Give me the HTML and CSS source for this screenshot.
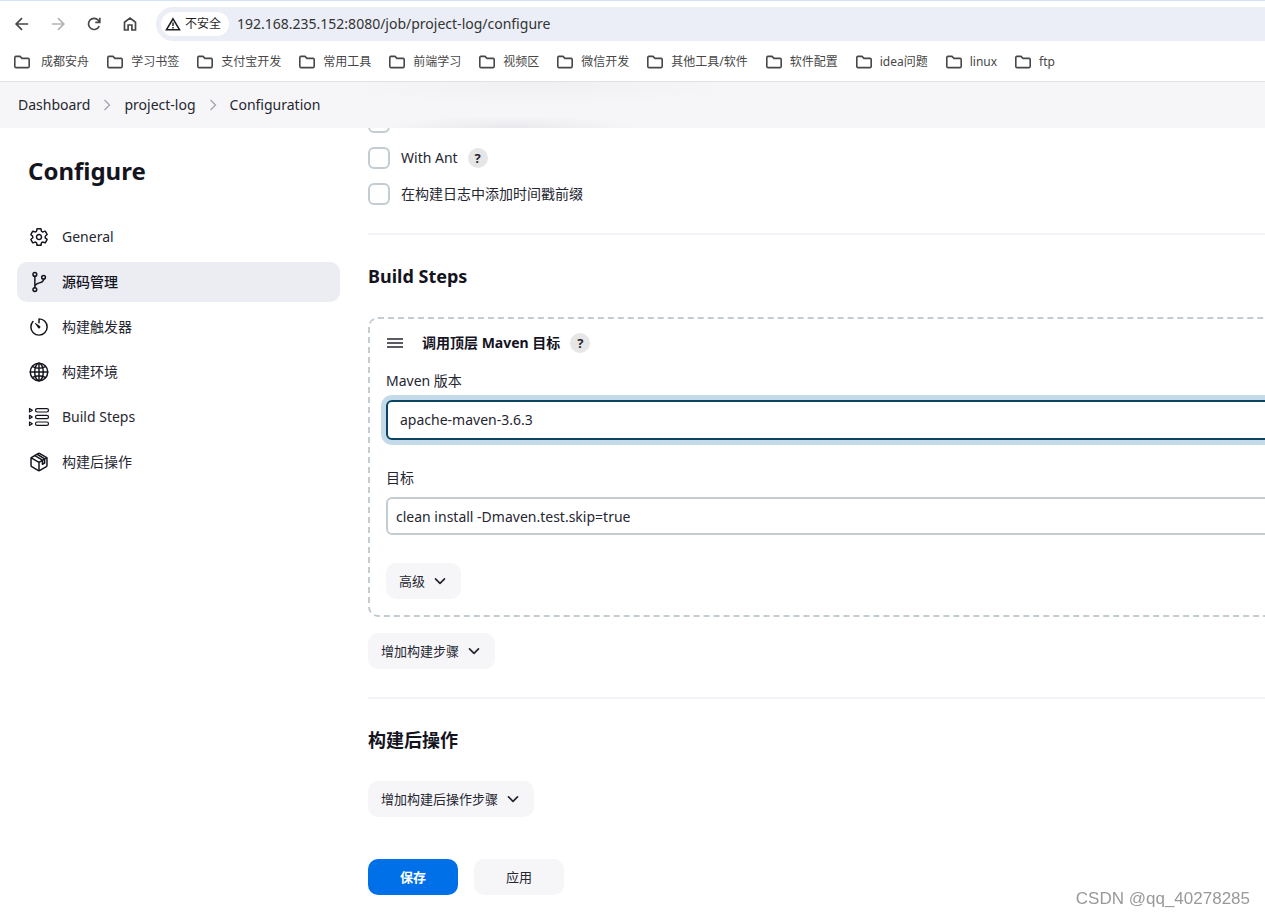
FILE: index.html
```
<!DOCTYPE html>
<html lang="zh-CN">
<head>
<meta charset="utf-8">
<title>project-log Config</title>
<link rel="stylesheet" href="styles.css">
</head>
<body>
<svg class="defs" aria-hidden="true">
  <symbol id="folder" viewBox="0 0 18 16"><path d="M1.8 12.6V3.4a1 1 0 0 1 1-1H7l2 2h6.200a1 1 0 0 1 1 1v7.200a1 1 0 0 1-1 1H2.800a1 1 0 0 1-1-1z" fill="none" stroke="currentColor" stroke-width="1.600"/></symbol>
  <symbol id="chevron" viewBox="0 0 12 12"><path d="M1.500 3.800L6 8.300l4.500-4.500" fill="none" stroke="currentColor" stroke-width="1.700" stroke-linecap="round" stroke-linejoin="round"/></symbol>
  <symbol id="crumb" viewBox="0 0 12 12"><path d="M3.500 1L8.500 6l-5 5" fill="none" stroke="currentColor" stroke-width="1.400"/></symbol>
</svg>

<header class="browser">
  <div class="toolbar">
    <button class="nav-button" aria-label="Back"><svg viewBox="0 0 20 20"><path d="M16.200 10H4.500M10 4.200L4.200 10l5.800 5.800" /></svg></button>
    <button class="nav-button disabled" aria-label="Forward" disabled><svg viewBox="0 0 20 20"><path d="M3.800 10h11.700M10 4.200l5.800 5.800-5.800 5.800"/></svg></button>
    <button class="nav-button" aria-label="Reload"><svg viewBox="0 0 20 20"><path d="M15.200 12.200A5.600 5.600 0 1 1 14.300 6.200L15.600 8M15.800 3.800V8.300H11.300"/></svg></button>
    <button class="nav-button" aria-label="Home"><svg viewBox="0 0 20 20"><path d="M4.500 16V8.200L10 4l5.500 4.200V16h-3.600v-5H8.100v5z"/></svg></button>
    <div class="address">
      <button class="chip"><svg viewBox="0 0 16 14"><path d="M8 1.800L14.500 12.700h-13z" fill="none" stroke="currentColor" stroke-width="1.600"/><path d="M8 5.500v3.600M8 10.100v1.500" stroke="currentColor" stroke-width="1.500"/></svg>不安全</button>
      <input class="url" type="text" aria-label="Address" value="192.168.235.152:8080/job/project-log/configure">
    </div>
  </div>
  <nav class="bookmarks">
    <a href="#"><svg><use href="#folder"/></svg>&nbsp;成都安舟</a>
    <a href="#"><svg><use href="#folder"/></svg>学习书签</a>
    <a href="#"><svg><use href="#folder"/></svg>支付宝开发</a>
    <a href="#"><svg><use href="#folder"/></svg>常用工具</a>
    <a href="#"><svg><use href="#folder"/></svg>前端学习</a>
    <a href="#"><svg><use href="#folder"/></svg>视频区</a>
    <a href="#"><svg><use href="#folder"/></svg>微信开发</a>
    <a href="#"><svg><use href="#folder"/></svg>其他工具/软件</a>
    <a href="#"><svg><use href="#folder"/></svg>软件配置</a>
    <a href="#"><svg><use href="#folder"/></svg>idea问题</a>
    <a href="#"><svg><use href="#folder"/></svg>linux</a>
    <a href="#"><svg><use href="#folder"/></svg>ftp</a>
  </nav>
</header>

<nav class="breadcrumbs">
  <a href="#">Dashboard</a>
  <svg><use href="#crumb"/></svg>
  <a href="#">project-log</a>
  <svg><use href="#crumb"/></svg>
  <a href="#">Configuration</a>
</nav>

<div class="page">
  <aside class="sidebar">
    <h1>Configure</h1>
    <nav class="tasks">
      <a href="#"><svg viewBox="0 0 512 512"><path d="M262.290 192.310a64 64 0 1057.400 57.400 64.130 64.130 0 00-57.400-57.400zM416.390 256a154.340 154.340 0 01-1.530 20.790l45.210 35.460a10.810 10.810 0 012.450 13.750l-42.770 74a10.810 10.810 0 01-13.140 4.590l-44.900-18.080a16.110 16.110 0 00-15.170 1.750A164.480 164.480 0 01325 400.800a15.940 15.940 0 00-8.820 12.140l-6.730 47.890a11.080 11.080 0 01-10.680 9.170h-85.540a11.110 11.110 0 01-10.690-8.870l-6.720-47.820a16.070 16.070 0 00-9-12.220 155.300 155.300 0 01-21.460-12.570 16 16 0 00-15.110-1.710l-44.890 18.070a10.810 10.810 0 01-13.140-4.580l-42.770-74a10.800 10.800 0 012.450-13.750l38.210-30a16.050 16.050 0 006-14.080c-.36-4.170-.58-8.330-.58-12.500s.21-8.270.58-12.350a16 16 0 00-6.070-13.940l-38.190-30A10.810 10.810 0 0149.480 186l42.770-74a10.810 10.810 0 0113.140-4.590l44.900 18.080a16.110 16.110 0 0015.170-1.750A164.480 164.480 0 01187 111.200a15.940 15.940 0 008.820-12.140l6.730-47.890A11.080 11.080 0 01213.230 42h85.540a11.110 11.110 0 0110.690 8.870l6.720 47.820a16.070 16.070 0 009 12.220 155.300 155.300 0 0121.460 12.570 16 16 0 0015.110 1.710l44.890-18.070a10.810 10.810 0 0113.140 4.580l42.770 74a10.800 10.800 0 01-2.450 13.750l-38.210 30a16.050 16.050 0 00-6.050 14.080c.33 4.140.55 8.300.55 12.470z"/></svg>General</a>
      <a href="#" class="active"><svg viewBox="0 0 512 512"><circle cx="150" cy="62" r="48"/><circle cx="150" cy="450" r="48"/><circle cx="372" cy="136" r="48"/><path d="M150 402V110M372 184c0 130-222 60-222 200"/></svg>源码管理</a>
      <a href="#"><svg viewBox="0 0 512 512"><path d="M102 118A207 207 0 0048 254c-1 115 93 209 208 210 115 0 208-93 208-208 0-113-90-205-203-208a5 5 0 00-5 5V145"/><path class="solid" d="M233.380 278.630l-79-113a8.130 8.130 0 0111.320-11.320l113 79a32.500 32.500 0 01-37.250 53.260 33.210 33.210 0 01-8.070-7.940z"/></svg>构建触发器</a>
      <a href="#"><svg viewBox="0 0 512 512"><circle cx="256" cy="256" r="224"/><ellipse cx="256" cy="256" rx="110" ry="224"/><path d="M256 32v448M32 256h448M92 120c100 50 228 50 328 0M92 392c100-50 228-50 328 0"/></svg>构建环境</a>
      <a href="#"><svg class="thin" viewBox="0 0 20 20"><path d="M.5 1.500v3.400l2.800-1.700zM.5 8.300v3.400L3.300 10zM.5 15.100v3.400l2.800-1.700z"/><rect x="6.500" y="1.600" width="13" height="3.400" rx="1.700"/><rect x="6.500" y="8.300" width="13" height="3.400" rx="1.700"/><rect x="6.500" y="15" width="13" height="3.400" rx="1.700"/></svg>Build Steps</a>
      <a href="#"><svg viewBox="0 0 512 512"><path d="M460 346V166a32 32 0 00-16-28L280 42a48 48 0 00-48 0L68 138a32 32 0 00-16 28v180a32 32 0 0016 28l164 96a48 48 0 0048 0l164-96a32 32 0 0016-28z"/><path d="M58 148l198 116 198-116M256 474V264M150 92l194 116v106l56-32V176L220 64"/></svg>构建后操作</a>
    </nav>
  </aside>

  <main class="content">
    <div class="checks">
      <label class="check"><input type="checkbox" aria-label="Option"></label>
      <div class="check"><input type="checkbox" id="ant"><label for="ant">With Ant</label><button class="help" aria-label="Help: With Ant">?</button></div>
      <label class="check"><input type="checkbox">在构建日志中添加时间戳前缀</label>
    </div>

    <section class="section">
      <h2>Build Steps</h2>
      <div class="step">
        <div class="step-head">
          <svg viewBox="0 0 16 10"><path d="M0 1h16M0 5h16M0 9h16" stroke="currentColor" stroke-width="1.600"/></svg>
          <h3>调用顶层 Maven 目标</h3>
          <button class="help" aria-label="Help: Maven">?</button>
        </div>
        <label class="field-label" for="version">Maven 版本</label>
        <select id="version" class="field select"><option>apache-maven-3.6.3</option></select>
        <label class="field-label spaced" for="goals">目标</label>
        <input id="goals" class="field text" type="text" value="clean install -Dmaven.test.skip=true">
        <button class="button">高级<svg><use href="#chevron"/></svg></button>
      </div>
      <button class="button">增加构建步骤<svg><use href="#chevron"/></svg></button>
    </section>

    <section class="section">
      <h2>构建后操作</h2>
      <button class="button">增加构建后操作步骤<svg><use href="#chevron"/></svg></button>
    </section>

    <div class="actions">
      <button class="button wide primary">保存</button>
      <button class="button wide">应用</button>
    </div>
  </main>
</div>
<div class="watermark">CSDN @qq_40278285</div>
</body>
</html>
```

FILE: styles.css
```
* {
  box-sizing: border-box;
}

body {
  margin: 0;
  min-height: 100vh;
  overflow: hidden;
  background: #fff;
  color: #262631;
  font: 14px/20px "Noto Sans", "Noto Sans CJK SC", sans-serif;
}

h1,
h2,
h3,
.tasks svg,
.active {
  color: #14141f;
}

a {
  color: inherit;
  text-decoration: none;
}

button,
input,
select {
  margin: 0;
  border: 0;
  color: inherit;
  font: inherit;
}

.defs {
  display: none;
}

/* Browser chrome */
.browser {
  position: relative;
  z-index: 2;
  background: #fff;
  border-top: 1px solid #d3e3fd;
  border-bottom: 1px solid #dfe1e3;
  color: #474747;
}

.toolbar {
  display: flex;
  align-items: center;
  padding: 6px 0 0 4px;
}

.nav-button {
  display: grid;
  place-items: center;
  width: 36px;
  height: 34px;
  padding: 0;
  background: none;
}

.nav-button svg {
  width: 20px;
  height: 20px;
  fill: none;
  stroke: #474747;
  stroke-width: 1.7;
}

.nav-button.disabled svg {
  stroke: #b4b4b4;
}

.address {
  display: flex;
  flex: 1;
  align-items: center;
  gap: 8px;
  height: 34px;
  margin-left: 8px;
  padding-left: 5px;
  border-radius: 17px 0 0 17px;
  background: #ebeef7;
}

.chip {
  display: flex;
  align-items: center;
  gap: 4px;
  height: 24px;
  padding: 0 8px 0 4px;
  border-radius: 12px;
  background: #fff;
  color: #1f1f1f;
  font-size: 12px;
  white-space: nowrap;
}

.chip svg {
  width: 16px;
  height: 14px;
}

.url {
  flex: 1;
  min-width: 0;
  padding: 0;
  background: none;
  color: #333;
  font-size: 14px;
}

.bookmarks {
  display: flex;
  gap: 17px;
  padding: 11px 13px 9px;
  font-size: 12px;
  white-space: nowrap;
}

.bookmarks a {
  display: flex;
  align-items: center;
  gap: 7px;
}

.bookmarks svg {
  width: 18px;
  height: 16px;
}

/* Breadcrumb bar */
.breadcrumbs {
  position: relative;
  z-index: 1;
  display: flex;
  align-items: center;
  gap: 11px;
  height: 46px;
  padding: 0 18px;
  background:
    radial-gradient(130px 12px at 510px 100%, #e9e9ed, transparent),
    radial-gradient(200px 24px at 540px 0, #f0f0f3, transparent),
    #f6f6f8;
}

.breadcrumbs svg {
  width: 12px;
  height: 12px;
  color: #a6a6b8;
}

/* Page */
.page {
  display: grid;
  grid-template-columns: 323px 1fr;
  gap: 28px;
  padding-left: 17px;
}

.sidebar h1 {
  margin: 0;
  padding: 25px 11px 28px;
  font-size: 24px;
  line-height: 36px;
}

.tasks {
  display: grid;
  gap: 5px;
}

.tasks a {
  display: flex;
  align-items: center;
  gap: 13px;
  height: 40px;
  padding: 0 12px;
  border-radius: 10px;
}

.tasks .active {
  background: #ecedf3;
  font-weight: 500;
}

.tasks svg {
  width: 20px;
  height: 20px;
  overflow: visible;
  fill: none;
  stroke: currentColor;
  stroke-width: 38;
  stroke-linecap: round;
  stroke-linejoin: round;
}

.tasks .thin {
  stroke-width: 1.2;
}

.tasks .solid {
  fill: currentColor;
  stroke: none;
}

.content {
  min-width: 0;
  margin: -17px -24px 0 0;
}

.checks {
  display: grid;
  gap: 14px;
  padding-bottom: 28px;
}

.check {
  display: flex;
  align-items: center;
  height: 22px;
}

.check input {
  appearance: none;
  width: 22px;
  height: 22px;
  margin-right: 11px;
  border: 2px solid #c3ccd1;
  border-radius: 6px;
}

.help {
  width: 20px;
  height: 20px;
  margin-left: 10px;
  padding: 0;
  border-radius: 50%;
  background: #e6e6e6;
  font-size: 13px;
  font-weight: 700;
}

.section {
  padding-bottom: 28px;
  border-top: 2px solid #f2f2f7;
}

h2 {
  margin: 0;
  padding: 28px 0;
  font-size: 18px;
  line-height: 26px;
}

.step {
  margin-bottom: 16px;
  padding: 14px 16px 16px;
  border: 2px dashed #c3ccd1;
  border-radius: 10px;
}

.step-head {
  display: flex;
  align-items: center;
  height: 20px;
}

.step-head svg {
  width: 16px;
  height: 10px;
  margin: 0 19px 0 1px;
}

h3 {
  margin: 0;
  font-size: 14px;
  line-height: 20px;
}

.field-label {
  display: block;
  padding: 18px 0 9px;
}

.spaced {
  padding-top: 28px;
}

.field {
  display: block;
  width: 100%;
  border: 2px solid #c3ccd1;
  border-radius: 6px;
  background: #fff;
}

.select {
  appearance: none;
  height: 40px;
  padding: 0 12px;
  border-color: #0b4566;
  box-shadow: 0 0 0 5px #c3dbe8;
}

.text {
  height: 38px;
  margin-bottom: 28px;
  padding: 0 8px;
}

.button {
  display: flex;
  align-items: center;
  justify-content: center;
  gap: 9px;
  height: 36px;
  padding: 0 15px 0 13px;
  border-radius: 10px;
  background: #f6f6f9;
  font-size: 13px;
}

.button svg {
  width: 12px;
  height: 12px;
}

.actions {
  display: flex;
  gap: 16px;
  padding-top: 14px;
}

.wide {
  width: 90px;
  padding: 0;
}

.primary {
  background: #0070e8;
  color: #fff;
  font-weight: 700;
}

.watermark {
  position: fixed;
  right: 15px;
  bottom: 8px;
  color: #999;
  font: 17px/20px "Liberation Sans", sans-serif;
}
```
